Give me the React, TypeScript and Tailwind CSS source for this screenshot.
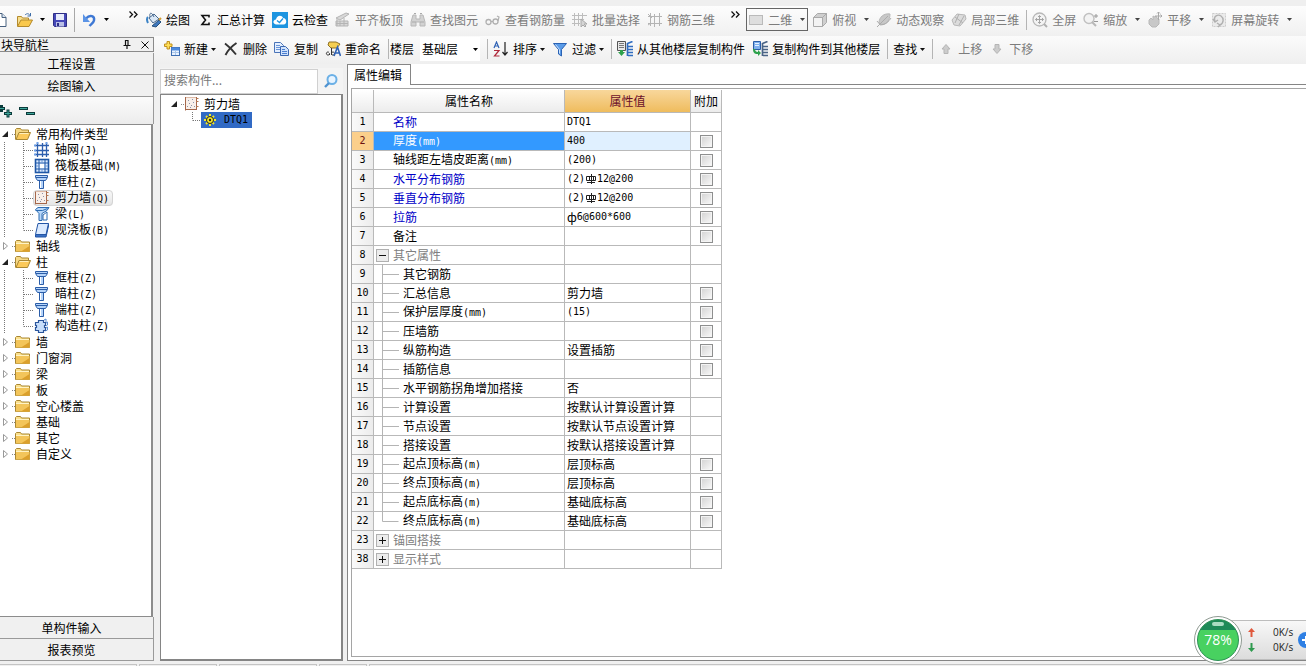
import React, { useState } from "react";

// ---------- icons ----------

type IconProps = { className?: string };

function Svg({ children, className = "" }: { children: React.ReactNode; className?: string }) {
  return (
    <svg width="16" height="16" viewBox="0 0 16 16" fill="none" className={`shrink-0 ${className}`} aria-hidden="true">
      {children}
    </svg>
  );
}

const NewDocIcon = () => (
  <Svg>
    <path d="M3 1.5h8l4 4v9H3z" fill="#fff" stroke="#47607f" />
    <path d="M11 1.5v4h4" fill="#d8e4f2" stroke="#47607f" />
  </Svg>
);

const OpenIcon = () => (
  <Svg>
    <path d="M.5 14V4.500h4l1 1.500h6v2" fill="#f7df8e" stroke="#b48a2c" />
    <path d="M.5 14.500 4 8h11.500L12 14.500z" fill="#f9c84c" stroke="#b48a2c" />
    <path d="M8 3c2-2 4-1.500 5 .5M13.500 1v3h-3" stroke="#3f6ea8" />
  </Svg>
);

const SaveIcon = () => (
  <Svg>
    <path d="M1.500 1.500h13v13h-12l-1-1z" fill="#4648b8" stroke="#2e2f86" />
    <rect x="4" y="2" width="8" height="6" fill="#e8ecfb" />
    <rect x="4" y="10" width="8" height="4.500" fill="#b9bfe6" />
    <rect x="5" y="11" width="2" height="3" fill="#2e2f86" />
  </Svg>
);

const UndoIcon = () => (
  <Svg>
    <path d="M5 6.500C9 2 14 4 13 8.500 12.500 11 10 12 8.500 14" stroke="#3e78d4" strokeWidth="2.400" />
    <path d="M2 2v8h7z" fill="#5b94e6" />
  </Svg>
);

const PaintIcon = () => (
  <Svg>
    <path d="M3 6 8 2l5 5-6 4z" fill="#dbe8f6" stroke="#48698f" />
    <path d="M4 5C3 0 6 0 8 5" stroke="#48698f" />
    <path d="M2 5c-2 2-1 4 0 6" stroke="#3b83c6" strokeWidth="2" />
    <path d="m6 14 7-6 2 2-5 5z" fill="#3f78bd" stroke="#25517f" />
    <path d="m13 8 2-2" stroke="#d29d32" strokeWidth="2" />
  </Svg>
);

const SumIcon = () => (
  <Svg>
    <path d="M12 5.500V3.500H5L8.500 8 5 12.500h7v-2" stroke="#111" strokeWidth="1.600" />
  </Svg>
);

const CloudIcon = () => (
  <Svg>
    <rect width="16" height="16" fill="#1d94e0" />
    <path d="M4.500 12.500C.5 12 .5 8 4 7.500 4.500 3 10 2.500 11 6c4 0 4.500 6.500.5 6.500z" fill="#fff" />
    <path d="m5 8.500 2.500 2 3.500-4" stroke="#1d94e0" strokeWidth="1.400" />
  </Svg>
);

const FlatTopIcon = () => (
  <Svg>
    <path d="M1 6 11 1l3 1-9 6zM1 9h12v5H1z" fill="#d8d8d8" stroke="#b4b4b4" />
    <path d="M2 7v7M5 9v5M9 6v8M1 11.500h12" stroke="#b4b4b4" />
  </Svg>
);

const BinocularsIcon = () => (
  <Svg>
    <path d="M3 3h3v4h4V3h3l2 7v4h-5v-4H6v4H1v-4z" fill="#d2d2d2" stroke="#b8b8b8" />
    <path d="M2 10h4M10 10h4M4 1.500h2M10 1.500h2" stroke="#aaa" />
  </Svg>
);

const GlassesIcon = () => (
  <Svg>
    <circle cx="3.500" cy="10" r="2.500" stroke="#b0b0b0" strokeWidth="1.300" />
    <circle cx="10.500" cy="9.500" r="2.500" stroke="#b0b0b0" strokeWidth="1.300" />
    <path d="M6 9.500h2M13 9l1-4-2-1" stroke="#b0b0b0" strokeWidth="1.200" />
  </Svg>
);

const BatchIcon = () => (
  <Svg>
    <path d="M2.500 1v13M6.500 1v13M10.500 1v8M0 3.500h15M0 7.500h12M0 11.500h8" stroke="#bdbdbd" />
    <path d="M9 7v8l2-2 2 2 1-1-2-2h3z" fill="#d5d5d5" stroke="#aaa" />
  </Svg>
);

const Rebar3DIcon = () => (
  <Svg>
    <path d="M3.500 1v13M7.500 2v13M12.500 1v13M1 4.500h14M1 11.500h14M1 2l4 4M1 13l3-2" stroke="#b4b4b4" />
  </Svg>
);

const PlaneIcon = () => (
  <Svg>
    <rect x="1.500" y="3.500" width="13" height="9" fill="#dedede" stroke="#bababa" />
  </Svg>
);

const CubeIcon = () => (
  <Svg>
    <path d="M1.500 5.500h9v9h-9z" fill="#f3f3f3" stroke="#aaa" />
    <path d="m1.500 5.500 4-4h9l-4 4zM14.500 1.500v9l-4 4v-9z" fill="#cfcfcf" stroke="#aaa" />
  </Svg>
);

const OrbitIcon = () => (
  <Svg>
    <path d="M3 11C3 5 8 1 14 2c0 7-4 11-10 11z" fill="#c8c8c8" stroke="#b8b8b8" />
    <path d="M1 15 12 4M1 9c3 5 9 5 14-3" stroke="#acacac" />
  </Svg>
);

const LocalIcon = () => (
  <Svg>
    <path d="M1 8 6 2l8 1 1 4-6 7-6-1z" fill="#dcdcdc" stroke="#b8b8b8" />
    <path d="m4 5 8 6M8 2l-4 9M13 4l-5 9" stroke="#b0b0b0" />
  </Svg>
);

const FullIcon = () => (
  <Svg>
    <circle cx="7.500" cy="7.500" r="6.500" fill="#f3f3f3" stroke="#b8b8b8" strokeWidth="1.300" />
    <path d="M7.500 3.500v8M3.500 7.500h8M6 5l1.500-1.500L9 5M6 10l1.500 1.500L9 10M5 6 3.500 7.500 5 9M10 6l1.500 1.500L10 9" stroke="#a5a5a5" />
    <path d="m12 12 3 3" stroke="#b0b0b0" strokeWidth="2" />
  </Svg>
);

const ZoomIcon = () => (
  <Svg>
    <circle cx="6" cy="6.500" r="5" fill="#f3f3f3" stroke="#c0c0c0" strokeWidth="1.400" />
    <path d="m9 10 4 4" stroke="#b8b8b8" strokeWidth="2" />
    <path d="M13 2v4M11 4h4M11 9.500h4" stroke="#999" />
  </Svg>
);

const PanIcon = () => (
  <Svg>
    <path d="M2 8 4 6l2 2V4l2 1 1-1 1 2 2 1v5l-3 3H5L2 12z" fill="#c8c8c8" stroke="#b8b8b8" />
    <path d="M11.500 0v8M8 4h7M10 1.500 11.500 0 13 1.500M13.500 2.500 15 4l-1.500 1.500" stroke="#a8a8a8" />
  </Svg>
);

const RotateIcon = () => (
  <Svg>
    <rect x="1.500" y="1.500" width="13" height="13" fill="#ebebeb" stroke="#ccc" strokeDasharray="2 1" />
    <path d="M4 9C2 4 7 2 10 4s3 7-1 9M2 7l2 3 3-2M6 11l3 2-2 2" stroke="#b0b0b0" strokeWidth="1.400" />
  </Svg>
);

const AddIcon = () => (
  <Svg>
    <rect x="7.500" y="6.500" width="8" height="8" fill="#eaf3ff" stroke="#3f6fb2" />
    <path d="M7.500 8h8" stroke="#4d8ade" strokeWidth="3" />
    <path d="M11.500 9v5M8 11.500h7" stroke="#a9c6ea" />
    <path d="M3 .5h2.500v2.500H8v2.500H5.500V8H3V5.500H.5V3H3z" fill="#ffdf57" stroke="#c09020" />
  </Svg>
);

const DeleteIcon = () => (
  <Svg>
    <path d="M2 2.500c4 3 8 7 11 11M13.500 2C9 5 5 9 2.500 14" stroke="#333" strokeWidth="1.900" />
  </Svg>
);

const CopyIcon = () => (
  <Svg>
    <path d="M.5 1.500h6l3 3v7h-9z" fill="#e4efff" stroke="#4a74b8" />
    <path d="M2 4.500h4M2 6.500h6M2 8.500h4" stroke="#6a95d8" />
    <path d="M6.500 5.500h5l3 3v6h-8z" fill="#cfe1fb" stroke="#3b67b0" />
    <path d="M8 8.500h3M8 10.500h5M8 12.500h5" stroke="#4b7fd0" />
  </Svg>
);

const RenameIcon = () => (
  <Svg>
    <path d="M4 1h7l4 2-3 4H6L3 4z" fill="#f5cf52" stroke="#8f7226" />
    <path d="M4 11.500a1.500 1.500 0 1 0-1 2.500c1 0 1.500-.5 1.500-1.500V14M6.500 7v7M6.500 12.500a1.500 1.500 0 1 1 0 .1" stroke="#333" />
    <path d="m9 15 3.500-9L15.500 15M10.500 12h4" stroke="#2f62b5" strokeWidth="1.600" />
  </Svg>
);

const SortIcon = () => (
  <Svg>
    <path d="m1 7 2.500-6L6 7M2 5h3" stroke="#2f62b5" strokeWidth="1.200" />
    <path d="M1 9.500h5L1.500 15H6.500" stroke="#b02a3c" strokeWidth="1.200" />
    <path d="M12 1v13M9.500 11l2.500 3 2.500-3" stroke="#222" strokeWidth="1.200" />
  </Svg>
);

const FilterIcon = () => (
  <Svg>
    <path d="M1.500 2.500h13l-5 6V15l-3-2V8.500z" fill="#5a9be8" stroke="#2a62b4" />
    <path d="m3.500 3.500 4 5v4" stroke="#cbe3ff" />
  </Svg>
);

// stacked floor slabs shared by both floor-copy icons
const Floors = ({ color }: { color: string }) => (
  <path d="M10.500 2v13M10.500 2.500 15.500.5M11 5.500h5M11 8.500h5M11 11.500h5M11 14.500h5" stroke={color} strokeWidth="1.700" />
);

const FloorFromIcon = () => (
  <Svg>
    <path d="M.5.5h8v9h-8z" fill="#e9e9e9" stroke="#555" />
    <path d="M2 2.500h5M2 4.500h5M2 6.500h5" stroke="#777" />
    <path d="M3 9h3v2h2l-3.500 4L1 11h2z" fill="#2ea24c" />
    <Floors color="#2f6cc0" />
  </Svg>
);

const FloorToIcon = () => (
  <Svg>
    <path d="M1.500.5h7v8h-7z" fill="#7eb0ee" stroke="#2c5da6" />
    <path d="M3 2.500h4M3 4.500h4" stroke="#e5f1ff" />
    <path d="M1 8c0 5 3 5 5 5v2l3-3-3-3v2c-2 0-3-1-3-3z" fill="#2ea24c" />
    <Floors color="#4a6486" />
  </Svg>
);

const MoveUpIcon = () => (
  <Svg>
    <path d="m8 3.500 4 4.500h-2v4.500H6V8H4z" fill="#ccc" stroke="#b5b5b5" />
  </Svg>
);

const MoveDownIcon = () => (
  <Svg>
    <path d="m8 12.500 4-4.500h-2V3.500H6V8H4z" fill="#ccc" stroke="#b5b5b5" />
  </Svg>
);

const FolderIcon = () => (
  <Svg>
    <path d="M.5 13.500v-10l1-1h4l1 1.500h8v9.500z" fill="#fbe08d" stroke="#a98733" />
    <path d="M1 6h13.500v7.500H1z" fill="#f3c55a" />
    <path d="M6 13.500 14.500 8v5.500z" fill="#dba02c" />
    <path d="M1 5.500h13" stroke="#fff3c4" />
  </Svg>
);

const FolderOpenIcon = () => (
  <Svg>
    <path d="M.5 13.500v-10l1-1h4l1 1.500h7v3" fill="#f6d987" stroke="#a98733" />
    <path d="M1 13.500 4 6.500h11.500l-3 7z" fill="#fbc95a" stroke="#a98733" />
    <path d="M4.500 7.500h9" stroke="#fff0bd" />
  </Svg>
);

const AxisIcon = () => (
  <Svg>
    <path d="M3.500 1v14M8.500 1v14M12.500 1v14M1 3.500h14M1 8.500h14M1 12.500h14" stroke="#2d5fae" strokeWidth="1.300" />
    <path d="M0 3.500h2M0 8.500h2M0 12.500h2M3.500 0v2M12.500 0v2" stroke="#6fa0e6" strokeWidth="2" />
  </Svg>
);

const RaftIcon = () => (
  <Svg>
    <rect x="1.500" y="1.500" width="13" height="13" fill="#dcebff" stroke="#1f57a6" strokeWidth="1.600" />
    <path d="M5 2v12M11 2v12M2 5h12M2 11h12" stroke="#1f57a6" />
    <rect x="6" y="6" width="4" height="4" fill="#fff" />
    <path d="M8 2v3M8 11v3M2 8h3M11 8h3" stroke="#6c97d4" />
  </Svg>
);

const ColumnIcon = () => (
  <Svg>
    <path d="M1.500 1.500h12v2l-2 3H9.500v8h-4v-8h-2l-2-3z" fill="#b5d4fa" stroke="#2b5da8" />
    <path d="M2 3.500h11M4 6.500h7" stroke="#2b5da8" />
    <path d="M6.500 7v7" stroke="#fff" />
  </Svg>
);

const WallIcon = () => (
  <Svg>
    <path d="M1.500 1.500h11v12h-11z" fill="#f8efe9" stroke="#dcb9a6" />
    <path d="M1.500 1v13.500M1 13.500h12M12.500 1v13" stroke="#a5674a" />
    <path d="M12 2.500h2.500M12 5.500h2.500M12 10.500h2.500" stroke="#b5764f" />
    <path d="M4 4.500h1M8 3.500h1M5 7.500h1M9 6.500h1M3 10.500h1M7 9.500h1M10 10.500h1M6 11.500h1" stroke="#8d93a8" />
  </Svg>
);

const BeamIcon = () => (
  <Svg>
    <path d="M1.500 3.500 4 1.500h11l-2 3-5 3v7H5v-7z" fill="#b9d8fa" stroke="#2b6bb2" />
    <path d="M1.500 4.500h7l5-2M9 14V9l4-3v8z" stroke="#2b6bb2" />
  </Svg>
);

const SlabIcon = () => (
  <Svg>
    <path d="M1.500 12.500V15H12l2.500-11V1.500" fill="#3a70c4" stroke="#2456a6" />
    <path d="M4 1.500h10.500L12 12.500H1.500z" fill="#dcebff" stroke="#2456a6" />
  </Svg>
);

const StructColumnIcon = () => (
  <Svg>
    <path d="M4.500 2.500h5v2h2v3h-1v2h1v3h-2v2h-5v-2h-3v-3h1v-2h-1v-3h3z" fill="#c7defb" stroke="#2a559c" strokeWidth="1.200" />
    <path d="m10 2 2-1v3M12 5l1.500-1v3L12 8M12 10l1.500-1v3l-2 1" stroke="#5c8ed2" />
  </Svg>
);

const GearIcon = () => (
  <Svg>
    <path d="M8 2v12M2 8h12M4 4l8 8M12 4l-8 8" stroke="#f4e92a" strokeWidth="2" />
    <circle cx="8" cy="8" r="3.500" fill="#f4e92a" stroke="#222" />
    <circle cx="8" cy="8" r="1.200" fill="#222" />
  </Svg>
);

const SearchIcon = () => (
  <Svg>
    <circle cx="9" cy="6.500" r="4.500" fill="#e8f4ff" stroke="#6bb0e6" strokeWidth="2" />
    <path d="m6 10-4 4" stroke="#4f93d0" strokeWidth="2.400" />
  </Svg>
);

const Caret = ({ className = "" }: IconProps) => (
  <svg width="5" height="3" viewBox="0 0 5 3" className={`shrink-0 ${className}`} aria-hidden="true">
    <path d="M0 0h5L2.500 3z" fill="currentColor" />
  </svg>
);

const Chevrons = () => (
  <svg width="9" height="7" viewBox="0 0 9 7" fill="none" aria-hidden="true">
    <path d="m.5.5 3 3-3 3M5 .5l3 3-3 3" stroke="#111" strokeWidth="1.300" />
  </svg>
);

// grade III rebar sign that stands before a diameter
const RebarSign = () => (
  <svg width="12" height="12" viewBox="0 0 12 12" fill="none" className="inline-block align-middle" role="img" aria-label="HRB400">
    <path d="M1.500 3.500h9v4h-9zM6.500 1v10M4.500 3v5M8.500 3v5M2 9.500h8" stroke="#222" />
  </svg>
);

// ---------- shared pieces ----------

// Latin runs are set in a fixed-width face next to the Chinese text
function Mixed({ text }: { text: string }) {
  return (
    <>
      {text.split(/([\x21-\x7e]+|⏀)/).map((part, i) => {
        if (part === "⏀") return <RebarSign key={i} />;
        if (i % 2 === 0) return part;
        return (
          <span key={i} className="font-['DejaVu_Sans_Mono','Noto_Sans_CJK_SC',monospace] text-[10px]">{part}</span>
        );
      })}
    </>
  );
}

const Sep = () => <span className="-mr-0.5 h-5 w-px shrink-0 bg-[#b4b4b4]" />;

interface ToolProps {
  icon?: React.ReactNode;
  label: string;
  caret?: boolean;
  disabled?: boolean;
}

function Tool({ icon, label, caret, disabled }: ToolProps) {
  return (
    <button
      type="button"
      disabled={disabled}
      className="flex shrink-0 items-center gap-1 whitespace-nowrap text-black disabled:text-[#7c7c7c]"
    >
      {icon}
      <span>{label}</span>
      {caret && <Caret className={disabled ? "ml-1 text-[#444]" : "-ml-px text-[#111]"} />}
    </button>
  );
}

function TopToolbar() {
  return (
    <div className="flex h-[30px] shrink-0 items-center overflow-hidden bg-linear-to-b from-[#fdfdfd] to-[#f0f0f0] pb-[3px]">
      <div className="flex w-[146px] shrink-0 items-center">
        <button type="button" aria-label="新建工程" className="-ml-[9px]"><NewDocIcon /></button>
        <button type="button" aria-label="打开" className="ml-2.5 flex items-center gap-[7px]"><OpenIcon /><Caret /></button>
        <button type="button" aria-label="保存" className="ml-[7px]"><SaveIcon /></button>
        <span className="ml-[6px] h-6 w-px bg-[#a8a8a8]" />
        <button type="button" aria-label="撤销" className="ml-1.5 flex items-center gap-[7px]"><UndoIcon /><Caret /></button>
        <button type="button" aria-label="更多" className="mb-2.5 ml-5"><Chevrons /></button>
      </div>
      <div className="flex shrink-0 items-center gap-[7px]">
        <Tool icon={<PaintIcon />} label="绘图" />
        <Tool icon={<SumIcon />} label="汇总计算" />
        <Tool icon={<CloudIcon />} label="云检查" />
        <Tool icon={<FlatTopIcon />} label="平齐板顶" disabled />
        <Tool icon={<BinocularsIcon />} label="查找图元" disabled />
        <Tool icon={<GlassesIcon />} label="查看钢筋量" disabled />
        <Tool icon={<BatchIcon />} label="批量选择" disabled />
        <Tool icon={<Rebar3DIcon />} label="钢筋三维" disabled />
      </div>
      <button type="button" aria-label="更多" className="mb-2.5 ml-4 mr-1.5"><Chevrons /></button>
      <button type="button" className="flex h-[23px] w-[62px] shrink-0 items-center gap-1 whitespace-nowrap border border-[#666] pl-px text-[#7c7c7c]">
        <PlaneIcon />
        <span>二维</span>
        <Caret className="ml-1 text-[#444]" />
      </button>
      <div className="ml-1 flex shrink-0 items-center gap-[7px]">
        <Tool icon={<CubeIcon />} label="俯视" caret disabled />
        <Tool icon={<OrbitIcon />} label="动态观察" disabled />
        <Tool icon={<LocalIcon />} label="局部三维" disabled />
        <Sep />
        <Tool icon={<FullIcon />} label="全屏" disabled />
        <Tool icon={<ZoomIcon />} label="缩放" caret disabled />
        <Tool icon={<PanIcon />} label="平移" caret disabled />
        <Tool icon={<RotateIcon />} label="屏幕旋转" caret disabled />
      </div>
    </div>
  );
}

function ComponentToolbar() {
  return (
    <div className="flex h-7 shrink-0 items-center gap-[7px] overflow-hidden bg-linear-to-b from-[#fbfbfb] to-[#efefef] pb-0.5 pl-2.5">
      <Tool icon={<AddIcon />} label="新建" caret />
      <Tool icon={<DeleteIcon />} label="删除" />
      <Tool icon={<CopyIcon />} label="复制" />
      <Tool icon={<RenameIcon />} label="重命名" />
      <Sep />
      <label className="-ml-1 flex shrink-0 items-center gap-1.5">
        <span>楼层</span>
        <span className="relative flex items-center">
          <select className="h-6 w-[60px] appearance-none bg-white pl-0.5 text-xs text-black">
            <option>基础层</option>
          </select>
          <Caret className="pointer-events-none absolute right-0.5" />
        </span>
      </label>
      <Sep />
      <Tool icon={<SortIcon />} label="排序" caret />
      <Tool icon={<FilterIcon />} label="过滤" caret />
      <Sep />
      <Tool icon={<FloorFromIcon />} label="从其他楼层复制构件" />
      <Tool icon={<FloorToIcon />} label="复制构件到其他楼层" />
      <Sep />
      <Tool label="查找" caret />
      <Sep />
      <Tool icon={<MoveUpIcon />} label="上移" disabled />
      <Tool icon={<MoveDownIcon />} label="下移" disabled />
    </div>
  );
}

// ---------- navigation ----------

interface NavGroup {
  label: string;
  items?: { label: string; icon: React.ReactNode }[];
}

const groups: NavGroup[] = [
  {
    label: "常用构件类型",
    items: [
      { label: "轴网(J)", icon: <AxisIcon /> },
      { label: "筏板基础(M)", icon: <RaftIcon /> },
      { label: "框柱(Z)", icon: <ColumnIcon /> },
      { label: "剪力墙(Q)", icon: <WallIcon /> },
      { label: "梁(L)", icon: <BeamIcon /> },
      { label: "现浇板(B)", icon: <SlabIcon /> },
    ],
  },
  { label: "轴线" },
  {
    label: "柱",
    items: [
      { label: "框柱(Z)", icon: <ColumnIcon /> },
      { label: "暗柱(Z)", icon: <ColumnIcon /> },
      { label: "端柱(Z)", icon: <ColumnIcon /> },
      { label: "构造柱(Z)", icon: <StructColumnIcon /> },
    ],
  },
  { label: "墙" },
  { label: "门窗洞" },
  { label: "梁" },
  { label: "板" },
  { label: "空心楼盖" },
  { label: "基础" },
  { label: "其它" },
  { label: "自定义" },
];

function Arrow({ open }: { open: boolean }) {
  return (
    <svg width="15" height="16" viewBox="0 0 15 16" fill="none" className="shrink-0" aria-hidden="true">
      {open ? <path d="M8 5v6H2z" fill="#222" /> : <path d="M3.500 4.500v7l4-3.500z" fill="#fff" stroke="#999" />}
      <path d="M12 8.500h3" stroke="#888" strokeDasharray="1 1" />
    </svg>
  );
}

function NavButton({ children }: { children: React.ReactNode }) {
  return (
    <button type="button" className="h-[22px] shrink-0 border-b border-r border-[#9a9a9a] bg-[#f0f0f0] pr-2.5 text-center">
      {children}
    </button>
  );
}

function NavPanel() {
  const [selected, setSelected] = useState("0-3");

  return (
    <nav className="flex w-[154px] shrink-0 flex-col pt-px">
      <div className="mb-px flex h-[15px] shrink-0 items-center border border-l-0 border-[#8a8a8a] pl-px leading-[12px]">
        <span className="flex-1">块导航栏</span>
        <button type="button" aria-label="固定" className="mr-2.5">
          <svg width="8" height="9" viewBox="0 0 8 9" fill="none"><path d="M2.500 0v5M2 .5h3.500M5 0v5M.5 5.500h7M4 6v3" stroke="#111" strokeWidth="1.200" /></svg>
        </button>
        <button type="button" aria-label="关闭" className="mr-1">
          <svg width="8" height="8" viewBox="0 0 8 8"><path d="m.5.5 7 7M7.500.5l-7 7" stroke="#111" /></svg>
        </button>
      </div>
      <NavButton>工程设置</NavButton>
      <NavButton>绘图输入</NavButton>
      <div className="flex h-[27px] shrink-0 items-center gap-[7px] border-r border-[#9a9a9a] bg-linear-to-b from-[#fbfbfb] to-[#ececec]">
        <button type="button" aria-label="全部展开">
          <svg width="12" height="14" viewBox="0 0 12 14" fill="none">
            <path d="M0 4.500h5M1.500 1v7M4 9.500h8M8 5.500v8" stroke="#0b3b3b" strokeWidth="3" />
            <path d="M0 4.500h4M5 9.500h6M8 6.500v6" stroke="#3fa79b" />
          </svg>
        </button>
        <button type="button" aria-label="全部折叠">
          <svg width="16" height="14" viewBox="0 0 16 14" fill="none">
            <path d="M0 4.500h9M7 9.500h9" stroke="#0b3b3b" strokeWidth="3" />
            <path d="M1 4.500h7M8 9.500h7" stroke="#3fa79b" />
          </svg>
        </button>
      </div>
      <ul className="mr-px min-h-0 flex-1 overflow-hidden border-y border-r-2 border-[#8c8c8c] bg-white pt-px">
        {groups.map((group, g) => (
          <li key={group.label}>
            <button type="button" className="flex h-4 items-center leading-4">
              <Arrow open={!!group.items} />
              {group.items ? <FolderOpenIcon /> : <FolderIcon />}
              <span className="pl-[5px]">{group.label}</span>
            </button>
            {group.items && (
              <ul>
                {group.items.map((item, i) => {
                  const key = `${g}-${i}`;
                  const last = i === group.items!.length - 1;
                  return (
                    <li key={key} className="flex h-4">
                      <svg width="33" height="16" viewBox="0 0 33 16" className="shrink-0" aria-hidden="true">
                        <path d={last ? "M4.500 0v16M23.500 0v8.500M24 8.500h9" : "M4.500 0v16M23.500 0v16M24 8.500h9"} stroke="#777" strokeDasharray="1 1" fill="none" />
                      </svg>
                      <button
                        type="button"
                        onClick={() => setSelected(key)}
                        className={`flex h-4 items-center gap-[5px] whitespace-nowrap rounded-sm pl-px pr-1 leading-4 ${
                          selected === key ? "bg-linear-to-b from-[#fafafa] to-[#e4e4e4] outline-1 -outline-offset-1 outline-[#d4d4d4]" : ""
                        }`}
                      >
                        {item.icon}
                        <span><Mixed text={item.label} /></span>
                      </button>
                    </li>
                  );
                })}
              </ul>
            )}
          </li>
        ))}
      </ul>
      <NavButton>单构件输入</NavButton>
      <NavButton>报表预览</NavButton>
    </nav>
  );
}

function ComponentList() {
  return (
    <section className="flex w-[183px] shrink-0 flex-col pt-1">
      <div className="flex h-[26px] shrink-0 items-center bg-[#f4f4f4]">
        <input
          type="text"
          aria-label="搜索构件"
          placeholder="搜索构件..."
          className="h-[25px] w-[158px] border border-[#d0d0d0] bg-white px-[3px] pb-1 text-xs placeholder:text-[#777]"
        />
        <button type="button" aria-label="搜索" className="flex flex-1 justify-center"><SearchIcon /></button>
      </div>
      <ul className="flex-1 border border-b-2 border-r-2 border-[#858585] bg-white pt-px">
        <li>
          <button type="button" className="ml-2 flex h-4 items-center leading-4">
            <Arrow open />
            <WallIcon />
            <span className="pl-1">剪力墙</span>
          </button>
          <ul>
            <li className="flex h-4">
              <svg width="40" height="16" viewBox="0 0 40 16" className="shrink-0" aria-hidden="true">
                <path d="M31.500 0v8.500M32 8.500h8" stroke="#777" strokeDasharray="1 1" fill="none" />
              </svg>
              <button type="button" className="flex h-4 items-center gap-1.5 bg-[#316ac5] pl-px pr-1 leading-4">
                <GearIcon />
                <Mixed text="DTQ1" />
              </button>
            </li>
          </ul>
        </li>
      </ul>
    </section>
  );
}

// ---------- property table ----------

interface Property {
  no: number;
  name: string;
  value?: string;
  extra?: boolean; // has a tick box in the last column
  blue?: boolean;
  level?: number;
  group?: "open" | "closed";
}

const properties: Property[] = [
  { no: 1, name: "名称", value: "DTQ1", blue: true },
  { no: 2, name: "厚度(mm)", value: "400", extra: true },
  { no: 3, name: "轴线距左墙皮距离(mm)", value: "(200)", extra: true },
  { no: 4, name: "水平分布钢筋", value: "(2)⏀12@200", extra: true, blue: true },
  { no: 5, name: "垂直分布钢筋", value: "(2)⏀12@200", extra: true, blue: true },
  { no: 6, name: "拉筋", value: "ф6@600*600", extra: true, blue: true },
  { no: 7, name: "备注", extra: true },
  { no: 8, name: "其它属性", group: "open" },
  { no: 9, name: "其它钢筋", level: 1 },
  { no: 10, name: "汇总信息", value: "剪力墙", extra: true, level: 1 },
  { no: 11, name: "保护层厚度(mm)", value: "(15)", extra: true, level: 1 },
  { no: 12, name: "压墙筋", extra: true, level: 1 },
  { no: 13, name: "纵筋构造", value: "设置插筋", extra: true, level: 1 },
  { no: 14, name: "插筋信息", extra: true, level: 1 },
  { no: 15, name: "水平钢筋拐角增加搭接", value: "否", level: 1 },
  { no: 16, name: "计算设置", value: "按默认计算设置计算", level: 1 },
  { no: 17, name: "节点设置", value: "按默认节点设置计算", level: 1 },
  { no: 18, name: "搭接设置", value: "按默认搭接设置计算", level: 1 },
  { no: 19, name: "起点顶标高(m)", value: "层顶标高", extra: true, level: 1 },
  { no: 20, name: "终点顶标高(m)", value: "层顶标高", extra: true, level: 1 },
  { no: 21, name: "起点底标高(m)", value: "基础底标高", extra: true, level: 1 },
  { no: 22, name: "终点底标高(m)", value: "基础底标高", extra: true, level: 1 },
  { no: 23, name: "锚固搭接", group: "closed" },
  { no: 38, name: "显示样式", group: "closed" },
];

function nameColor(p: Property, active: boolean) {
  if (active) return "text-white";
  if (p.group) return "text-[#808080]";
  return p.blue ? "text-[#0000c8]" : "text-black";
}

function PropertyRow({ p, active, onSelect }: { p: Property; active: boolean; onSelect: () => void }) {
  const cell = "h-[19px] border-b border-r border-[#b9b9b9] p-0";
  return (
    <tr onClick={onSelect}>
      <th scope="row" className={`${cell} font-normal ${active ? "bg-[#fbcf8b] text-[#6b1010]" : "bg-linear-to-r from-[#fafafa] to-[#ececec]"}`}>
        <div className="flex h-[18px] items-center justify-center">
          <Mixed text={String(p.no)} />
        </div>
      </th>
      <td className={`${cell} ${active ? "bg-[#3399ff]" : ""}`}>
        <div className={`flex h-[18px] items-center whitespace-nowrap leading-[18px] ${nameColor(p, active)}`}>
          {p.level ? (
            <svg width="29" height="18" viewBox="0 0 29 18" className="shrink-0 overflow-visible" aria-hidden="true">
              <path d={p.no === 22 ? "M8.500-1v10.500h16" : "M8.500-1v19M9 9.500h16"} fill="none" stroke="#b4b4b4" />
            </svg>
          ) : (
            <span className="flex w-[19px] shrink-0 pl-0.5">
              {p.group && (
                <button type="button" aria-label={p.name} className="flex size-[13px] items-center justify-center border border-[#b0b0b0] bg-[#ececec]">
                  <svg width="7" height="7" viewBox="0 0 7 7" aria-hidden="true">
                    <path d={p.group === "open" ? "M0 3.500h7" : "M0 3.500h7M3.500 0v7"} stroke="#111" />
                  </svg>
                </button>
              )}
            </span>
          )}
          <span><Mixed text={p.name} /></span>
        </div>
      </td>
      <td className={`${cell} ${active ? "bg-[#e0f0ff]" : ""}`}>
        <div className="flex h-[18px] items-center whitespace-nowrap pl-0.5 leading-[18px]">
          <Mixed text={p.value ?? ""} />
        </div>
      </td>
      <td className={cell}>
        {p.extra && (
          <input
            type="checkbox"
            aria-label={`附加 ${p.name}`}
            className="mx-auto block size-[13px] appearance-none border border-[#8e8f8f] bg-linear-to-br from-[#d2d2d2] to-[#fafafa] shadow-[inset_0_0_0_1px_#f4f4f4] checked:bg-[#3399ff]"
          />
        )}
      </td>
    </tr>
  );
}

function PropertyEditor() {
  const [active, setActive] = useState(2);
  const head = "h-[23px] border-b border-r border-[#b9b9b9] p-0 font-normal";

  return (
    <section className="flex min-w-0 flex-1 flex-col bg-white">
      <div className="flex shrink-0">
        <button type="button" className="relative -mb-px h-[21px] w-16 border border-b-0 border-[#858585] bg-white pr-0.5">
          属性编辑
        </button>
      </div>
      <div className="flex min-h-0 flex-1 border border-r-0 border-[#858585] p-[3px] pr-0">
        <div className="min-h-0 flex-1 border border-r-0 border-[#a5a5a5] pt-px">
          <table className="w-[370px] table-fixed border-separate border-spacing-0">
            <colgroup>
              <col className="w-[22px]" />
              <col className="w-[191px]" />
              <col className="w-[126px]" />
              <col className="w-[31px]" />
            </colgroup>
            <thead>
              <tr>
                <th className={`${head} bg-linear-to-b from-white to-[#ececec]`} />
                <th className={`${head} bg-linear-to-b from-white to-[#ececec]`}>属性名称</th>
                <th className={`${head} bg-linear-to-b from-[#f8d79b] to-[#efbc5c] text-[#6b0f2a]`}>属性值</th>
                <th className={`${head} whitespace-nowrap bg-linear-to-b from-white to-[#ececec]`}>附加</th>
              </tr>
            </thead>
            <tbody>
              {properties.map((p) => (
                <PropertyRow key={p.no} p={p} active={p.no === active} onSelect={() => setActive(p.no)} />
              ))}
            </tbody>
          </table>
        </div>
      </div>
    </section>
  );
}

// floating memory / network meter at the corner of the desktop
function SpeedWidget() {
  return (
    <div className="absolute bottom-0.5 right-0 flex h-12 w-28 items-center overflow-hidden font-['Open_Sans',sans-serif]">
      <div className="absolute right-0 h-10 w-[88px] border-y border-[#bdbdbd] bg-linear-to-b from-[#f8f8f8] to-[#dcdcdc]" />
      <div className="relative flex size-12 items-center justify-center rounded-full border border-[#8f9a92] bg-white">
        <div className="relative flex size-[42px] items-center justify-center rounded-full border border-[#2b8f53] bg-linear-to-b from-[#1d8a58] from-25% to-[#48d160] to-25% text-sm text-white">
          <span className="absolute top-0.5 h-1 w-3 rounded-full bg-[#a9dcc2]" />
          78%
        </div>
      </div>
      <div className="relative ml-1.5 flex flex-col gap-1.5">
        <svg width="7" height="9" viewBox="0 0 7 9"><path d="M3.500 0 7 4H4.500v5h-2V4H0z" fill="#e0583c" /></svg>
        <svg width="7" height="9" viewBox="0 0 7 9"><path d="M3.500 9 7 5H4.500V0h-2v5H0z" fill="#2e9a4e" /></svg>
      </div>
      <div className="relative ml-[18px] whitespace-nowrap text-[10px] leading-[15px] text-[#222]">
        <div>0K/s</div>
        <div>0K/s</div>
      </div>
      <button type="button" aria-label="加速" className="absolute -right-2 flex size-4 items-center rounded-full bg-[#2f80e4] pl-1">
        <svg width="8" height="8" viewBox="0 0 8 8"><path d="M4 0v8M0 4h8" stroke="#fff" strokeWidth="2" /></svg>
      </button>
    </div>
  );
}

function App() {
  return (
    <div className="relative flex h-screen flex-col overflow-hidden bg-[#f0f0f0] font-['Noto_Sans_CJK_SC',sans-serif] text-xs text-black">
      <div className="h-1.5 shrink-0 bg-[#efefef]" />
      <TopToolbar />
      <div className="flex min-h-0 flex-1">
        <NavPanel />
        <div className="flex min-w-0 flex-1 flex-col">
          <ComponentToolbar />
          <div className="flex min-h-0 flex-1 gap-1 pl-1.5">
            <ComponentList />
            <PropertyEditor />
          </div>
        </div>
      </div>
      <footer className="flex h-[5px] shrink-0 items-end gap-0.5">
        <div className="h-0.5 w-[137px] border-r border-t border-[#c4c4c4]" />
        <div className="h-0.5 w-[78px] border-x border-t border-[#c4c4c4]" />
        <div className="h-0.5 w-[98px] border-x border-t border-[#c4c4c4]" />
        <div className="h-0.5 w-12 border-x border-t border-[#c4c4c4]" />
        <div className="h-0.5 flex-1 border-l border-t border-[#c4c4c4]" />
      </footer>
      <SpeedWidget />
    </div>
  );
}

export default App;
